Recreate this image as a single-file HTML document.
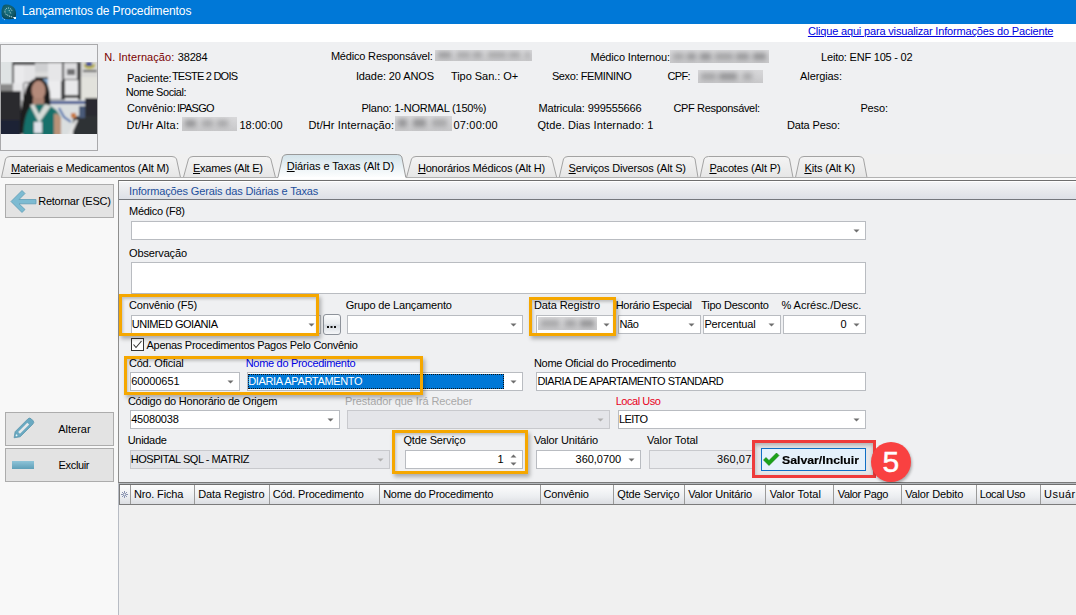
<!DOCTYPE html>
<html><head><meta charset="utf-8"><style>
html,body{margin:0;padding:0;}
body{width:1076px;height:615px;position:relative;overflow:hidden;background:#f0f0f0;font-family:"Liberation Sans",sans-serif;}
.t{position:absolute;white-space:nowrap;font-size:11px;line-height:13px;}
u{text-decoration:underline;text-underline-offset:1px;}
</style></head><body>

<div style="position:absolute;left:0.0px;top:0.0px;width:1076.0px;height:24.0px;box-sizing:border-box;background:#0078d7;"></div>
<svg style="position:absolute;left:0px;top:3px" width="18" height="18" viewBox="0 0 18 18">
<defs><radialGradient id="ig" cx="0.45" cy="0.4" r="0.7"><stop offset="0" stop-color="#1a7886"/><stop offset="0.7" stop-color="#0f5564"/><stop offset="1" stop-color="#0a3542"/></radialGradient></defs>
<path d="M2.5 4 Q3 1.5 6 1.5 Q12 1.5 15 6 Q16.5 9 16 12.5 Q15.5 15.5 12 16 Q7 16.5 4 15.5 Q1.5 14 1.5 10 Q1.5 6 2.5 4Z" fill="url(#ig)"/>
<path d="M5 9.5 Q4.5 5.5 8 5 Q11 5 12 8" stroke="#d5ecf0" stroke-width="0.9" fill="none" stroke-dasharray="1 1"/>
<path d="M5.5 11 L9 13 L15 15" stroke="#d5ecf0" stroke-width="0.9" fill="none" stroke-dasharray="1.2 0.8"/>
<path d="M9 7 L11 11" stroke="#d5ecf0" stroke-width="0.8" fill="none" stroke-dasharray="1 1"/>
<rect x="14" y="14" width="2" height="2" fill="#e8f6f8"/>
<path d="M2.5 15 L5 17" stroke="#cfe6ee" stroke-width="0.9" stroke-dasharray="1 1"/>
</svg>
<div class="t" style="left:22px;top:3px;color:#fff;font-size:12px;line-height:16px;letter-spacing:-0.1px">Lançamentos de Procedimentos</div>
<div style="position:absolute;left:0.0px;top:24.0px;width:1076.0px;height:18.0px;box-sizing:border-box;background:#fff;"></div>
<div class="t" style="left:807.9px;top:25px;color:#0000e0;font-size:11px;letter-spacing:-0.164px;text-decoration:underline;">Clique aqui para visualizar Informações do Paciente</div>
<div style="position:absolute;left:0.0px;top:42.0px;width:1076.0px;height:112.0px;box-sizing:border-box;background:#eff0f2;"></div>
<div style="position:absolute;left:0.0px;top:44.0px;width:98.0px;height:107.0px;box-sizing:border-box;border:1px solid #a9a9ab;background:#f0f1f3;"></div>
<svg style="position:absolute;left:1px;top:62px" width="96" height="72" viewBox="0 0 96 72">
<defs><filter id="bl" x="-5%" y="-5%" width="110%" height="110%"><feGaussianBlur stdDeviation="1.0"/></filter>
<clipPath id="pc"><rect width="96" height="72"/></clipPath></defs>
<g clip-path="url(#pc)"><g filter="url(#bl)">
<rect x="-2" y="-2" width="100" height="76" fill="#c8cacb"/>
<rect x="-2" y="-2" width="14" height="26" fill="#dfe3e4"/>
<rect x="11" y="0" width="70" height="38" fill="#3a3a3c"/>
<rect x="13" y="3" width="10" height="18" fill="#eaeaec"/>
<rect x="23" y="3" width="11" height="17" fill="#e4e4e6"/>
<rect x="34" y="1" width="13" height="9" fill="#cfd0d2"/>
<rect x="34" y="10" width="13" height="5" fill="#dcdcdc"/>
<rect x="42" y="17" width="8" height="7" fill="#8fb4d8"/>
<rect x="47" y="1" width="14" height="18" fill="#e6e6e8"/>
<rect x="63" y="1" width="13" height="16" fill="#dedee0"/>
<rect x="66" y="7" width="8" height="6" fill="#707072"/>
<rect x="12" y="21" width="10" height="17" fill="#e6e6e8"/>
<rect x="23" y="21" width="7" height="16" fill="#dcdcde"/>
<rect x="47" y="19" width="13" height="18" fill="#ececee"/>
<rect x="64" y="18" width="13" height="20" fill="#e8e8ea"/>
<rect x="80" y="-2" width="18" height="17" fill="#d8d8d6"/>
<path d="M83 1 Q88 7 94 1 L94 5 Q88 9 83 5Z" fill="#b8b040"/>
<rect x="85" y="0" width="6" height="4" fill="#3a4a98"/>
<rect x="82" y="8" width="14" height="2" fill="#505050"/>
<rect x="80" y="15" width="18" height="40" fill="#e2e2dc"/>
<rect x="-2" y="22" width="14" height="10" fill="#8a8a8a"/>
<rect x="-2" y="29" width="22" height="45" fill="#2a2a2e"/>
<rect x="-2" y="58" width="22" height="16" fill="#1c2236"/>
<rect x="46" y="38" width="40" height="36" fill="#dadedf"/>
<rect x="46" y="39" width="44" height="3" fill="#3a5290"/>
<rect x="64" y="33" width="16" height="3" fill="#303030"/>
<rect x="84" y="36" width="14" height="38" fill="#2a2c30"/>
<rect x="72" y="54" width="26" height="20" fill="#2e3034"/>
<rect x="78" y="44" width="6" height="12" fill="#4a5a78"/>
<path d="M58 46 L63 55 L70 60" stroke="#3e66a8" stroke-width="2" fill="none"/>
<rect x="70" y="51" width="5" height="5" fill="#c87a40"/>
<path d="M66 74 L74 58 L77 58 L70 74Z" fill="#e4e4e4"/>
<path d="M19 72 Q18 50 24 30 Q28 16 38 16 Q47 17 49 32 Q50 48 47 60 L44 72Z" fill="#1e1a1a"/>
<ellipse cx="37.5" cy="28.5" rx="7" ry="10" fill="#b48a7a"/>
<rect x="32" y="36" width="11" height="8" fill="#a88070"/>
<path d="M22 74 Q23 52 30 44 L38 42 L47 43 Q56 46 60 56 L60 74Z" fill="#18706a"/>
<path d="M29 43 L38 61 L50 44 L44 42 L38 52 L33 42Z" fill="#d8dcd8"/>
<rect x="33" y="60" width="8" height="11" fill="#dfe2e8"/>
<path d="M53 52 Q57 50 60 56 L60 74 L53 74Z" fill="#b89278"/>
</g></g></svg>
<div class="t" style="left:104.2px;top:51px;color:#7a0000;font-size:11px;letter-spacing:0.080px;">N. Internação:</div>
<div class="t" style="left:177.8px;top:51px;color:#000;font-size:11px;letter-spacing:-0.181px;">38284</div>
<div class="t" style="left:127.0px;top:72px;color:#000;font-size:11px;letter-spacing:-0.151px;">Paciente:</div>
<div class="t" style="left:171.9px;top:70px;color:#000;font-size:11px;letter-spacing:-0.766px;">TESTE 2 DOIS</div>
<div class="t" style="left:125.7px;top:86px;color:#000;font-size:11px;letter-spacing:-0.412px;">Nome Social:</div>
<div class="t" style="left:126.9px;top:102px;color:#000;font-size:11px;letter-spacing:-0.083px;">Convênio:</div>
<div class="t" style="left:176.9px;top:102px;color:#000;font-size:11px;letter-spacing:-0.741px;">IPASGO</div>
<div class="t" style="left:126.6px;top:119px;color:#000;font-size:11px;letter-spacing:0.226px;">Dt/Hr Alta:</div>
<div class="t" style="left:239.4px;top:119px;color:#000;font-size:11px;letter-spacing:0.075px;">18:00:00</div>
<div class="t" style="left:330.9px;top:50px;color:#000;font-size:11px;letter-spacing:-0.184px;">Médico Responsável:</div>
<div class="t" style="left:355.9px;top:70px;color:#000;font-size:11px;letter-spacing:-0.106px;">Idade: 20 ANOS</div>
<div class="t" style="left:450.9px;top:70px;color:#000;font-size:11px;letter-spacing:-0.036px;">Tipo San.: O+</div>
<div class="t" style="left:361.4px;top:102px;color:#000;font-size:11px;letter-spacing:-0.193px;">Plano: 1-NORMAL (150%)</div>
<div class="t" style="left:308.4px;top:119px;color:#000;font-size:11px;letter-spacing:0.118px;">Dt/Hr Internação:</div>
<div class="t" style="left:453.4px;top:119px;color:#000;font-size:11px;letter-spacing:0.218px;">07:00:00</div>
<div class="t" style="left:590.4px;top:51px;color:#000;font-size:11px;letter-spacing:-0.153px;">Médico Internou:</div>
<div class="t" style="left:551.9px;top:70px;color:#000;font-size:11px;letter-spacing:-0.392px;">Sexo: FEMININO</div>
<div class="t" style="left:667.4px;top:70px;color:#000;font-size:11px;letter-spacing:-0.621px;">CPF:</div>
<div class="t" style="left:538.4px;top:102px;color:#000;font-size:11px;letter-spacing:-0.130px;">Matricula: 999555666</div>
<div class="t" style="left:673.4px;top:102px;color:#000;font-size:11px;letter-spacing:-0.337px;">CPF Responsável:</div>
<div class="t" style="left:537.4px;top:119px;color:#000;font-size:11px;letter-spacing:0.107px;">Qtde. Dias Internado: 1</div>
<div class="t" style="left:821.1px;top:51px;color:#000;font-size:11px;letter-spacing:-0.215px;">Leito: ENF 105 - 02</div>
<div class="t" style="left:800.1px;top:70px;color:#000;font-size:11px;letter-spacing:-0.102px;">Alergias:</div>
<div class="t" style="left:860.4px;top:102px;color:#000;font-size:11px;letter-spacing:-0.114px;">Peso:</div>
<div class="t" style="left:786.9px;top:119px;color:#000;font-size:11px;letter-spacing:-0.130px;">Data Peso:</div>
<div style="position:absolute;left:435px;top:50px;width:97px;height:11px;overflow:hidden;background:linear-gradient(#d8d8da,#c8c8ca)"><div style="position:absolute;left:0;top:0;width:100%;height:100%;filter:blur(2.4px)"><div style="position:absolute;left:3px;top:2px;width:13px;height:6px;background:#9a9a9c"></div><div style="position:absolute;left:22px;top:2px;width:13px;height:6px;background:#a8a8aa"></div><div style="position:absolute;left:38px;top:2px;width:9px;height:6px;background:#a4a4a6"></div><div style="position:absolute;left:53px;top:2px;width:18px;height:6px;background:#a8a8aa"></div><div style="position:absolute;left:74px;top:2px;width:11px;height:6px;background:#a8a8aa"></div><div style="position:absolute;left:91px;top:2px;width:3px;height:6px;background:#9a9a9c"></div></div></div>
<div style="position:absolute;left:670px;top:50px;width:99px;height:13px;overflow:hidden;background:linear-gradient(#d8d8da,#c8c8ca)"><div style="position:absolute;left:0;top:0;width:100%;height:100%;filter:blur(2.4px)"><div style="position:absolute;left:3px;top:3px;width:11px;height:7px;background:#a8a8aa"></div><div style="position:absolute;left:17px;top:3px;width:9px;height:7px;background:#9a9a9c"></div><div style="position:absolute;left:30px;top:3px;width:11px;height:7px;background:#949496"></div><div style="position:absolute;left:45px;top:3px;width:18px;height:7px;background:#a4a4a6"></div><div style="position:absolute;left:66px;top:3px;width:13px;height:7px;background:#9a9a9c"></div><div style="position:absolute;left:83px;top:3px;width:13px;height:7px;background:#949496"></div></div></div>
<div style="position:absolute;left:698px;top:70px;width:65px;height:13px;overflow:hidden;background:linear-gradient(#d8d8da,#c8c8ca)"><div style="position:absolute;left:0;top:0;width:100%;height:100%;filter:blur(2.4px)"><div style="position:absolute;left:3px;top:3px;width:15px;height:7px;background:#a4a4a6"></div><div style="position:absolute;left:21px;top:3px;width:18px;height:7px;background:#949496"></div><div style="position:absolute;left:45px;top:3px;width:9px;height:7px;background:#a8a8aa"></div></div></div>
<div style="position:absolute;left:182px;top:117px;width:55px;height:14px;overflow:hidden;background:linear-gradient(#d8d8da,#c8c8ca)"><div style="position:absolute;left:0;top:0;width:100%;height:100%;filter:blur(2.4px)"><div style="position:absolute;left:3px;top:3px;width:11px;height:7px;background:#949496"></div><div style="position:absolute;left:20px;top:3px;width:11px;height:7px;background:#a8a8aa"></div><div style="position:absolute;left:35px;top:3px;width:11px;height:7px;background:#a8a8aa"></div></div></div>
<div style="position:absolute;left:395px;top:116px;width:57px;height:15px;overflow:hidden;background:linear-gradient(#d8d8da,#c8c8ca)"><div style="position:absolute;left:0;top:0;width:100%;height:100%;filter:blur(2.4px)"><div style="position:absolute;left:3px;top:3px;width:9px;height:8px;background:#949496"></div><div style="position:absolute;left:18px;top:3px;width:13px;height:8px;background:#949496"></div><div style="position:absolute;left:37px;top:3px;width:15px;height:8px;background:#a8a8aa"></div></div></div>
<div style="position:absolute;left:0.0px;top:154.0px;width:1076.0px;height:26.0px;box-sizing:border-box;background:#f0f0f0;"></div>
<svg style="position:absolute;left:0;top:150px" width="1076" height="32" viewBox="0 150 1076 32"><defs><linearGradient id="tg" x1="0" y1="0" x2="0" y2="1"><stop offset="0" stop-color="#f4f4f4"/><stop offset="1" stop-color="#e6e6e6"/></linearGradient><linearGradient id="ta" x1="0" y1="0" x2="0" y2="1"><stop offset="0" stop-color="#d3e3ea"/><stop offset="1" stop-color="#ffffff"/></linearGradient></defs><path d="M1.5 177.5 L5.5 159.0 Q6.5 156.5 10.0 156.5 L172.0 156.5 Q175.5 156.5 176.5 159.0 L180.5 177.5" fill="url(#tg)" stroke="#a3a3a3" stroke-width="1"/><path d="M183.4 177.5 L188.5 159.0 Q189.5 156.5 193.0 156.5 L266.3 156.5 Q269.8 156.5 270.8 159.0 L275.5 177.5" fill="url(#tg)" stroke="#a3a3a3" stroke-width="1"/><path d="M406.5 177.5 L411.5 159.0 Q412.5 156.5 416.0 156.5 L547.5 156.5 Q551.0 156.5 552.0 159.0 L556.7 177.5" fill="url(#tg)" stroke="#a3a3a3" stroke-width="1"/><path d="M559.2 177.5 L563.5 159.0 Q564.5 156.5 568.0 156.5 L690.5 156.5 Q694.0 156.5 695.0 159.0 L698.0 177.5" fill="url(#tg)" stroke="#a3a3a3" stroke-width="1"/><path d="M700.0 177.5 L704.0 159.0 Q705.0 156.5 708.5 156.5 L785.0 156.5 Q788.5 156.5 789.5 159.0 L793.0 177.5" fill="url(#tg)" stroke="#a3a3a3" stroke-width="1"/><path d="M795.5 177.5 L799.5 159.0 Q800.5 156.5 804.0 156.5 L859.0 156.5 Q862.5 156.5 863.5 159.0 L867.0 177.5" fill="url(#tg)" stroke="#a3a3a3" stroke-width="1"/><rect x="1" y="177" width="1076" height="1" fill="#b2b2b2"/><path d="M277.7 178.5 L282.5 157.0 Q283.5 154.5 287.0 154.5 L397.3 154.5 Q400.8 154.5 401.8 157.0 L406.0 178.5" fill="url(#ta)" stroke="#9a9a9a" stroke-width="1"/><rect x="0" y="178" width="1076" height="2" fill="#fafafa"/><rect x="278.5" y="177" width="127" height="2" fill="#ffffff"/></svg>
<div class="t" style="left:10.9px;top:162px;color:#000;font-size:11px;letter-spacing:-0.183px;"><u>M</u>ateriais e Medicamentos (Alt M)</div>
<div class="t" style="left:193.0px;top:162px;color:#000;font-size:11px;letter-spacing:-0.267px;"><u>E</u>xames (Alt E)</div>
<div class="t" style="left:417.9px;top:162px;color:#000;font-size:11px;letter-spacing:-0.194px;"><u>H</u>onorários Médicos (Alt H)</div>
<div class="t" style="left:568.6px;top:162px;color:#000;font-size:11px;letter-spacing:-0.177px;"><u>S</u>erviços Diversos (Alt S)</div>
<div class="t" style="left:709.4px;top:162px;color:#000;font-size:11px;letter-spacing:-0.158px;"><u>P</u>acotes (Alt P)</div>
<div class="t" style="left:804.4px;top:162px;color:#000;font-size:11px;letter-spacing:-0.115px;"><u>K</u>its (Alt K)</div>
<div class="t" style="left:286.8px;top:160px;color:#000;font-size:11px;letter-spacing:-0.088px;"><u>D</u>iárias e Taxas (Alt D)</div>
<div style="position:absolute;left:0.0px;top:179.0px;width:118.0px;height:436.0px;box-sizing:border-box;background:#f8f8f8;"></div>
<div style="position:absolute;left:5.0px;top:184.0px;width:109.0px;height:34.0px;box-sizing:border-box;background:#e3e3e3;border:1px solid #acacac;"></div>
<svg style="position:absolute;left:9px;top:188px" width="30" height="27" viewBox="9 188 30 27">
<path d="M11 201.5 L22 190.5 L25 193.5 L19 199.5 L36 199.5 L36 203.8 L19 203.8 L25 209.5 L22 212.5 Z" fill="#7dbbd2" stroke="#5f9db5" stroke-width="0.8" stroke-linejoin="miter"/>
</svg>
<div class="t" style="left:38.2px;top:195px;color:#000;font-size:11px;letter-spacing:-0.239px;">Retornar (ESC)</div>
<div style="position:absolute;left:5.0px;top:412.0px;width:109.0px;height:34.0px;box-sizing:border-box;background:#e3e3e3;border:1px solid #acacac;"></div>
<svg style="position:absolute;left:10px;top:416px" width="26" height="26" viewBox="10 416 26 26">
<g transform="translate(23.3,428.6) rotate(-45)">
<path d="M-13 0 L-8 -3.6 L10 -3.6 Q12.5 -3.6 12.5 -1.2 L12.5 1.2 Q12.5 3.6 10 3.6 L-8 3.6 Z" fill="#6aa9c1" stroke="#5592aa" stroke-width="0.7"/>
<rect x="-6" y="-1.3" width="13" height="2.6" fill="#e6e8ea"/>
<circle cx="-9.5" cy="0" r="0.9" fill="#e8f4f8"/>
</g>
</svg>
<div class="t" style="left:58.2px;top:423px;color:#000;font-size:11px;letter-spacing:-0.001px;">Alterar</div>
<div style="position:absolute;left:5.0px;top:448.0px;width:109.0px;height:34.0px;box-sizing:border-box;background:#e3e3e3;border:1px solid #acacac;"></div>
<div style="position:absolute;left:12px;top:461px;width:22px;height:8px;background:linear-gradient(#8fc4d8,#5e9fb8);"></div>
<div class="t" style="left:58.6px;top:459px;color:#000;font-size:11px;letter-spacing:-0.350px;">Excluir</div>
<div style="position:absolute;left:118.0px;top:180.0px;width:958.0px;height:303.0px;box-sizing:border-box;background:#eff0f2;border-left:1px solid #8e8e8e;border-top:1px solid #6e6e6e;border-bottom:1px solid #7a7a7a;"></div>
<div style="position:absolute;left:119.0px;top:181.0px;width:957.0px;height:19.0px;box-sizing:border-box;background:linear-gradient(#ffffff 0,#ffffff 1px,#f3f4f6 1px,#e6e8ec 60%,#dde0e7 100%);border-bottom:1px solid #74777d;"></div>
<div class="t" style="left:129.0px;top:185px;color:#1d4f9c;font-size:11px;letter-spacing:-0.149px;">Informações Gerais das Diárias e Taxas</div>
<div class="t" style="left:129.0px;top:205px;color:#000;font-size:11px;letter-spacing:-0.279px;">Médico (F8)</div>
<div style="position:absolute;left:131.0px;top:221.0px;width:735.0px;height:19.0px;box-sizing:border-box;background:#fff;border:1px solid #b9bcc1;"></div>
<svg style="position:absolute;left:853px;top:229px" width="7" height="4"><path d="M0.5 0.5 L6.5 0.5 L3.5 3.5 Z" fill="#6e6e6e"/></svg>
<div class="t" style="left:129.0px;top:247px;color:#000;font-size:11px;letter-spacing:-0.138px;">Observação</div>
<div style="position:absolute;left:131.0px;top:262.0px;width:735.0px;height:32.0px;box-sizing:border-box;background:#fff;border:1px solid #b9bcc1;"></div>
<div class="t" style="left:128.9px;top:299px;color:#000;font-size:11px;letter-spacing:-0.127px;">Convênio (F5)</div>
<div style="position:absolute;left:131.0px;top:315.0px;width:190.0px;height:19.0px;box-sizing:border-box;background:#fff;border:1px solid #b9bcc1;"></div>
<svg style="position:absolute;left:308px;top:323px" width="7" height="4"><path d="M0.5 0.5 L6.5 0.5 L3.5 3.5 Z" fill="#6e6e6e"/></svg>
<div class="t" style="left:131.8px;top:318px;color:#000;font-size:11px;letter-spacing:-0.470px;">UNIMED GOIANIA</div>
<div style="position:absolute;left:323px;top:314px;width:18px;height:21px;box-sizing:border-box;border:1px solid #8d929a;border-radius:3px;background:linear-gradient(#fbfcfd,#e9ecef 45%,#d8dde3 55%,#f6f7f9)"></div>
<svg style="position:absolute;left:326px;top:325px" width="12" height="4"><rect x="1" y="1" width="2" height="2" fill="#111"/><rect x="4.5" y="1" width="2" height="2" fill="#111"/><rect x="8" y="1" width="2" height="2" fill="#111"/></svg>
<div class="t" style="left:345.7px;top:299px;color:#000;font-size:11px;letter-spacing:-0.176px;">Grupo de Lançamento</div>
<div style="position:absolute;left:347.0px;top:315.0px;width:176.0px;height:19.0px;box-sizing:border-box;background:#fff;border:1px solid #b9bcc1;"></div>
<svg style="position:absolute;left:510px;top:323px" width="7" height="4"><path d="M0.5 0.5 L6.5 0.5 L3.5 3.5 Z" fill="#6e6e6e"/></svg>
<div class="t" style="left:533.9px;top:299px;color:#000;font-size:11px;letter-spacing:-0.090px;">Data Registro</div>
<div style="position:absolute;left:536.0px;top:315.0px;width:80.0px;height:19.0px;box-sizing:border-box;background:#fff;border:1px solid #b9bcc1;"></div>
<svg style="position:absolute;left:603px;top:323px" width="7" height="4"><path d="M0.5 0.5 L6.5 0.5 L3.5 3.5 Z" fill="#6e6e6e"/></svg>
<div style="position:absolute;left:538px;top:317px;width:59px;height:13px;overflow:hidden;background:linear-gradient(#d8d8da,#c8c8ca)"><div style="position:absolute;left:0;top:0;width:100%;height:100%;filter:blur(2.4px)"><div style="position:absolute;left:3px;top:3px;width:18px;height:7px;background:#a8a8aa"></div><div style="position:absolute;left:27px;top:3px;width:11px;height:7px;background:#a4a4a6"></div><div style="position:absolute;left:42px;top:3px;width:14px;height:7px;background:#949496"></div></div></div>
<div class="t" style="left:615.7px;top:299px;color:#000;font-size:11px;letter-spacing:-0.288px;">Horário Especial</div>
<div style="position:absolute;left:618.0px;top:315.0px;width:83.0px;height:19.0px;box-sizing:border-box;background:#fff;border:1px solid #b9bcc1;"></div>
<svg style="position:absolute;left:688px;top:323px" width="7" height="4"><path d="M0.5 0.5 L6.5 0.5 L3.5 3.5 Z" fill="#6e6e6e"/></svg>
<div class="t" style="left:619.4px;top:318px;color:#000;font-size:11px;letter-spacing:-0.394px;">Não</div>
<div class="t" style="left:701.2px;top:299px;color:#000;font-size:11px;letter-spacing:-0.239px;">Tipo Desconto</div>
<div style="position:absolute;left:703.0px;top:315.0px;width:78.0px;height:19.0px;box-sizing:border-box;background:#fff;border:1px solid #b9bcc1;"></div>
<svg style="position:absolute;left:768px;top:323px" width="7" height="4"><path d="M0.5 0.5 L6.5 0.5 L3.5 3.5 Z" fill="#6e6e6e"/></svg>
<div class="t" style="left:704.4px;top:318px;color:#000;font-size:11px;letter-spacing:-0.136px;">Percentual</div>
<div class="t" style="left:781.4px;top:299px;color:#000;font-size:11px;letter-spacing:-0.015px;">% Acrésc./Desc.</div>
<div style="position:absolute;left:783.0px;top:315.0px;width:83.0px;height:19.0px;box-sizing:border-box;background:#fff;border:1px solid #b9bcc1;"></div>
<svg style="position:absolute;left:853px;top:323px" width="7" height="4"><path d="M0.5 0.5 L6.5 0.5 L3.5 3.5 Z" fill="#6e6e6e"/></svg>
<div class="t" style="left:840.4px;top:318px;color:#000;font-size:11px;">0</div>
<svg style="position:absolute;left:131px;top:338px" width="13" height="13" viewBox="0 0 13 13">
<rect x="0.5" y="0.5" width="12" height="12" fill="#fff" stroke="#333"/>
<path d="M2.5 6.5 L5 9.5 L10.5 3" stroke="#333" stroke-width="1.1" fill="none"/>
</svg>
<div class="t" style="left:146.5px;top:339px;color:#000;font-size:11px;letter-spacing:-0.288px;">Apenas Procedimentos Pagos Pelo Convênio</div>
<div class="t" style="left:128.9px;top:357px;color:#000;font-size:11px;letter-spacing:-0.180px;">Cód. Oficial</div>
<div class="t" style="left:245.7px;top:357px;color:#0000e6;font-size:11px;letter-spacing:-0.301px;">Nome do Procedimento</div>
<div class="t" style="left:533.9px;top:357px;color:#000;font-size:11px;letter-spacing:-0.254px;">Nome Oficial do Procedimento</div>
<div style="position:absolute;left:130.0px;top:372.0px;width:110.0px;height:19.0px;box-sizing:border-box;background:#fff;border:1px solid #b9bcc1;"></div>
<svg style="position:absolute;left:227px;top:380px" width="7" height="4"><path d="M0.5 0.5 L6.5 0.5 L3.5 3.5 Z" fill="#6e6e6e"/></svg>
<div class="t" style="left:131.2px;top:375px;color:#000;font-size:11px;letter-spacing:-0.086px;">60000651</div>
<div style="position:absolute;left:247.0px;top:372.0px;width:276.0px;height:19.0px;box-sizing:border-box;background:#fff;border:1px solid #b9bcc1;"></div>
<svg style="position:absolute;left:510px;top:380px" width="7" height="4"><path d="M0.5 0.5 L6.5 0.5 L3.5 3.5 Z" fill="#6e6e6e"/></svg>
<div style="position:absolute;left:248.0px;top:374.0px;width:256.0px;height:15.0px;box-sizing:border-box;background:#0078d7;border:1px dotted #111;"></div>
<div class="t" style="left:248.2px;top:375px;color:#fff;font-size:11px;letter-spacing:-0.344px;">DIARIA APARTAMENTO</div>
<div style="position:absolute;left:536.0px;top:372.0px;width:330.0px;height:19.0px;box-sizing:border-box;background:#fff;border:1px solid #b9bcc1;"></div>
<div class="t" style="left:537.4px;top:375px;color:#000;font-size:11px;letter-spacing:-0.515px;">DIARIA DE APARTAMENTO STANDARD</div>
<div class="t" style="left:127.9px;top:395px;color:#000;font-size:11px;letter-spacing:-0.225px;">Código do Honorário de Origem</div>
<div class="t" style="left:344.9px;top:395px;color:#a9a9a9;font-size:11px;letter-spacing:-0.084px;">Prestador que Irá Receber</div>
<div class="t" style="left:615.7px;top:395px;color:#e8001c;font-size:11px;letter-spacing:-0.467px;">Local Uso</div>
<div style="position:absolute;left:130.0px;top:410.0px;width:210.0px;height:19.0px;box-sizing:border-box;background:#fff;border:1px solid #b9bcc1;"></div>
<svg style="position:absolute;left:327px;top:418px" width="7" height="4"><path d="M0.5 0.5 L6.5 0.5 L3.5 3.5 Z" fill="#6e6e6e"/></svg>
<div class="t" style="left:131.2px;top:413px;color:#000;font-size:11px;letter-spacing:-0.186px;">45080038</div>
<div style="position:absolute;left:347.0px;top:410.0px;width:263.0px;height:19.0px;box-sizing:border-box;background:#e4e5e9;border:1px solid #c8c9cd;"></div>
<svg style="position:absolute;left:597px;top:418px" width="7" height="4"><path d="M0.5 0.5 L6.5 0.5 L3.5 3.5 Z" fill="#b0b0b0"/></svg>
<div style="position:absolute;left:618.0px;top:410.0px;width:248.0px;height:19.0px;box-sizing:border-box;background:#fff;border:1px solid #b9bcc1;"></div>
<svg style="position:absolute;left:853px;top:418px" width="7" height="4"><path d="M0.5 0.5 L6.5 0.5 L3.5 3.5 Z" fill="#6e6e6e"/></svg>
<div class="t" style="left:618.9px;top:413px;color:#000;font-size:11px;letter-spacing:-0.602px;">LEITO</div>
<div class="t" style="left:127.7px;top:434px;color:#000;font-size:11px;letter-spacing:-0.300px;">Unidade</div>
<div class="t" style="left:403.4px;top:434px;color:#000;font-size:11px;letter-spacing:-0.130px;">Qtde Serviço</div>
<div class="t" style="left:533.9px;top:434px;color:#000;font-size:11px;letter-spacing:-0.126px;">Valor Unitário</div>
<div class="t" style="left:646.9px;top:434px;color:#000;font-size:11px;letter-spacing:0.022px;">Valor Total</div>
<div style="position:absolute;left:130.0px;top:450.0px;width:260.0px;height:19.0px;box-sizing:border-box;background:#e4e5e9;border:1px solid #c8c9cd;"></div>
<svg style="position:absolute;left:377px;top:458px" width="7" height="4"><path d="M0.5 0.5 L6.5 0.5 L3.5 3.5 Z" fill="#b0b0b0"/></svg>
<div class="t" style="left:130.7px;top:453px;color:#000;font-size:11px;letter-spacing:-0.446px;">HOSPITAL SQL - MATRIZ</div>
<div style="position:absolute;left:405.0px;top:450.0px;width:118.0px;height:19.0px;box-sizing:border-box;background:#fff;border:1px solid #b9bcc1;"></div>
<svg style="position:absolute;left:509px;top:453px" width="9" height="14"><path d="M1.5 4.5 L4.5 1.5 L7.5 4.5Z M1.5 9.5 L4.5 12.5 L7.5 9.5Z" fill="#6e6e6e"/></svg>
<div class="t" style="left:497.4px;top:453px;color:#000;font-size:11px;">1</div>
<div style="position:absolute;left:536.0px;top:450.0px;width:105.0px;height:19.0px;box-sizing:border-box;background:#fff;border:1px solid #b9bcc1;"></div>
<svg style="position:absolute;left:628px;top:458px" width="7" height="4"><path d="M0.5 0.5 L6.5 0.5 L3.5 3.5 Z" fill="#6e6e6e"/></svg>
<div class="t" style="left:575.6px;top:453px;color:#000;font-size:11px;letter-spacing:-0.034px;">360,0700</div>
<div style="position:absolute;left:649.0px;top:450.0px;width:111.0px;height:19.0px;box-sizing:border-box;background:#eaebee;border:1px solid #c8c9cd;"></div>
<div class="t" style="left:716.9px;top:453px;color:#000;font-size:11px;letter-spacing:0.143px;">360,07</div>
<div style="position:absolute;left:752.0px;top:440.0px;width:124.0px;height:38.0px;box-sizing:border-box;background:#e6e6e8;border:3px solid #ee3b3b;box-shadow:inset 0 2px 4px rgba(0,0,0,0.25);"></div>
<div style="position:absolute;left:761.0px;top:448.0px;width:105.0px;height:23.0px;box-sizing:border-box;background:#e5f1fb;border:1px solid #0f6fc6;"></div>
<svg style="position:absolute;left:762px;top:451px" width="18" height="17" viewBox="0 0 18 17">
<path d="M1.5 9 L4 6.5 L7 9.5 L14.5 2 L17 4.5 L7 14.5 Z" fill="#19a319" stroke="#0d7a0d" stroke-width="0.6"/>
</svg>
<div class="t" style="left:781.6px;top:454px;font-weight:bold;transform:scaleX(1.115);transform-origin:0 0;-webkit-text-stroke:0.15px #000">Salvar/Incluir</div>
<div style="position:absolute;left:871px;top:442px;width:40px;height:40px;border-radius:50%;background:#f94141;box-shadow:1px 2px 3px rgba(0,0,0,0.3)"></div>
<div class="t" style="left:882.6px;top:445px;font-size:30px;line-height:33px;color:#fff;-webkit-text-stroke:0.5px #fff">5</div>
<div style="position:absolute;left:118.8px;top:293.8px;width:200.2px;height:42.2px;box-sizing:border-box;border:3px solid #f5a700;box-shadow:2px 3px 4px rgba(0,0,0,0.28), inset 1px 2px 3px rgba(0,0,0,0.2);"></div>
<div style="position:absolute;left:124.0px;top:356.0px;width:299.0px;height:39.0px;box-sizing:border-box;border:3px solid #f5a700;box-shadow:2px 3px 4px rgba(0,0,0,0.28), inset 1px 2px 3px rgba(0,0,0,0.2);"></div>
<div style="position:absolute;left:529.0px;top:297.0px;width:86.5px;height:38.5px;box-sizing:border-box;border:3px solid #f5a700;box-shadow:2px 3px 4px rgba(0,0,0,0.28), inset 1px 2px 3px rgba(0,0,0,0.2);"></div>
<div style="position:absolute;left:391.8px;top:429.5px;width:136.2px;height:44.5px;box-sizing:border-box;border:3px solid #f5a700;box-shadow:2px 3px 4px rgba(0,0,0,0.28), inset 1px 2px 3px rgba(0,0,0,0.2);"></div>
<div style="position:absolute;left:118.0px;top:483.0px;width:958.0px;height:132.0px;box-sizing:border-box;background:#f0f0f0;border-left:1px solid #b8bcc4;"></div>
<div style="position:absolute;left:119.0px;top:484.0px;width:957.0px;height:21.0px;box-sizing:border-box;background:linear-gradient(#fdfdfd,#eceef1 60%,#dcdee2);border-top:1px solid #6f6f6f;border-bottom:1px solid #7b7b7b;border-left:1px solid #7b7b7b;"></div>
<div style="position:absolute;left:119.0px;top:483.0px;width:957.0px;height:1.0px;box-sizing:border-box;background:#b4b8bc;"></div>
<div style="position:absolute;left:130.0px;top:485.0px;width:1.0px;height:19.0px;box-sizing:border-box;background:#9a9a9a;"></div>
<div style="position:absolute;left:194.0px;top:485.0px;width:1.0px;height:19.0px;box-sizing:border-box;background:#9a9a9a;"></div>
<div style="position:absolute;left:268.8px;top:485.0px;width:1.0px;height:19.0px;box-sizing:border-box;background:#9a9a9a;"></div>
<div style="position:absolute;left:379.3px;top:485.0px;width:1.0px;height:19.0px;box-sizing:border-box;background:#9a9a9a;"></div>
<div style="position:absolute;left:539.5px;top:485.0px;width:1.0px;height:19.0px;box-sizing:border-box;background:#9a9a9a;"></div>
<div style="position:absolute;left:613.3px;top:485.0px;width:1.0px;height:19.0px;box-sizing:border-box;background:#9a9a9a;"></div>
<div style="position:absolute;left:683.8px;top:485.0px;width:1.0px;height:19.0px;box-sizing:border-box;background:#9a9a9a;"></div>
<div style="position:absolute;left:765.0px;top:485.0px;width:1.0px;height:19.0px;box-sizing:border-box;background:#9a9a9a;"></div>
<div style="position:absolute;left:833.3px;top:485.0px;width:1.0px;height:19.0px;box-sizing:border-box;background:#9a9a9a;"></div>
<div style="position:absolute;left:901.3px;top:485.0px;width:1.0px;height:19.0px;box-sizing:border-box;background:#9a9a9a;"></div>
<div style="position:absolute;left:976.0px;top:485.0px;width:1.0px;height:19.0px;box-sizing:border-box;background:#9a9a9a;"></div>
<div style="position:absolute;left:1040.0px;top:485.0px;width:1.0px;height:19.0px;box-sizing:border-box;background:#9a9a9a;"></div>
<svg style="position:absolute;left:120px;top:490px" width="9" height="9" viewBox="0 0 9 9"><g stroke="#7d88a8" stroke-width="0.9"><path d="M4.5 1 V8 M1 4.5 H8 M2 2 L7 7 M7 2 L2 7"/></g><circle cx="4.5" cy="4.5" r="1" fill="#eef0f3"/></svg>
<div class="t" style="left:134.0px;top:488px;color:#000;font-size:11px;letter-spacing:-0.150px;">Nro. Ficha</div>
<div class="t" style="left:198.2px;top:488px;color:#000;font-size:11px;letter-spacing:-0.073px;">Data Registro</div>
<div class="t" style="left:272.7px;top:488px;color:#000;font-size:11px;letter-spacing:-0.189px;">Cód. Procedimento</div>
<div class="t" style="left:383.2px;top:488px;color:#000;font-size:11px;letter-spacing:-0.286px;">Nome do Procedimento</div>
<div class="t" style="left:543.5px;top:488px;color:#000;font-size:11px;letter-spacing:-0.157px;">Convênio</div>
<div class="t" style="left:617.2px;top:488px;color:#000;font-size:11px;letter-spacing:-0.111px;">Qtde Serviço</div>
<div class="t" style="left:688.2px;top:488px;color:#000;font-size:11px;letter-spacing:-0.150px;">Valor Unitário</div>
<div class="t" style="left:769.7px;top:488px;color:#000;font-size:11px;letter-spacing:0.022px;">Valor Total</div>
<div class="t" style="left:837.7px;top:488px;color:#000;font-size:11px;letter-spacing:-0.328px;">Valor Pago</div>
<div class="t" style="left:905.2px;top:488px;color:#000;font-size:11px;letter-spacing:-0.141px;">Valor Debito</div>
<div class="t" style="left:979.7px;top:488px;color:#000;font-size:11px;letter-spacing:-0.405px;">Local Uso</div>
<div class="t" style="left:1044.0px;top:488px;color:#000;font-size:11px;letter-spacing:0.466px;">Usuário</div>
</body></html>
